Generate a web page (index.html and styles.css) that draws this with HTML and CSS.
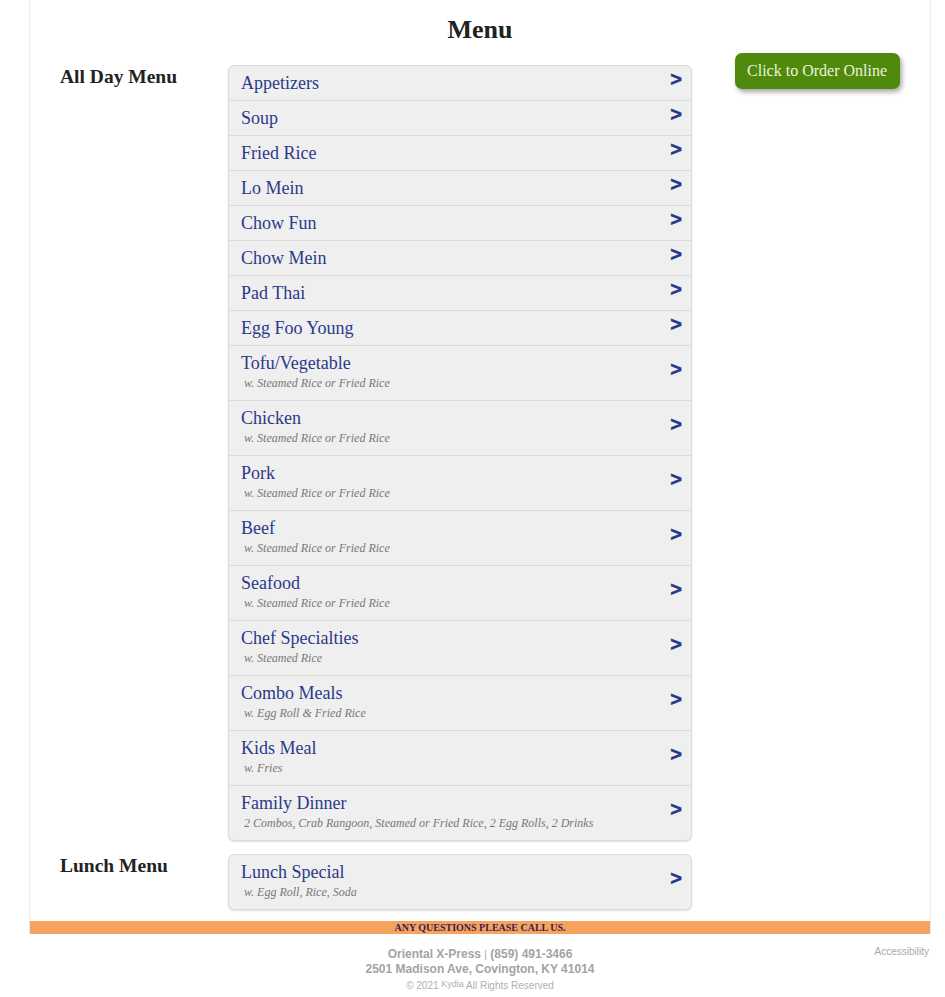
FILE: index.html
```html
<!DOCTYPE html>
<html lang="en">
<head>
<meta charset="utf-8">
<title>Menu</title>
<link rel="stylesheet" href="styles.css">
</head>
<body>
<div class="page">
  <h1 class="title">Menu</h1>
  <div class="content">
    <div class="main">
      <section class="section">
        <h2 class="label">All Day Menu</h2>
        <ul class="list">
          <li class="row"><div class="text"><div class="name">Appetizers</div></div><span class="chev">&gt;</span></li>
          <li class="row"><div class="text"><div class="name">Soup</div></div><span class="chev">&gt;</span></li>
          <li class="row"><div class="text"><div class="name">Fried Rice</div></div><span class="chev">&gt;</span></li>
          <li class="row"><div class="text"><div class="name">Lo Mein</div></div><span class="chev">&gt;</span></li>
          <li class="row"><div class="text"><div class="name">Chow Fun</div></div><span class="chev">&gt;</span></li>
          <li class="row"><div class="text"><div class="name">Chow Mein</div></div><span class="chev">&gt;</span></li>
          <li class="row"><div class="text"><div class="name">Pad Thai</div></div><span class="chev">&gt;</span></li>
          <li class="row"><div class="text"><div class="name">Egg Foo Young</div></div><span class="chev">&gt;</span></li>
          <li class="row"><div class="text"><div class="name">Tofu/Vegetable</div><div class="desc">w. Steamed Rice or Fried Rice</div></div><span class="chev">&gt;</span></li>
          <li class="row"><div class="text"><div class="name">Chicken</div><div class="desc">w. Steamed Rice or Fried Rice</div></div><span class="chev">&gt;</span></li>
          <li class="row"><div class="text"><div class="name">Pork</div><div class="desc">w. Steamed Rice or Fried Rice</div></div><span class="chev">&gt;</span></li>
          <li class="row"><div class="text"><div class="name">Beef</div><div class="desc">w. Steamed Rice or Fried Rice</div></div><span class="chev">&gt;</span></li>
          <li class="row"><div class="text"><div class="name">Seafood</div><div class="desc">w. Steamed Rice or Fried Rice</div></div><span class="chev">&gt;</span></li>
          <li class="row"><div class="text"><div class="name">Chef Specialties</div><div class="desc">w. Steamed Rice</div></div><span class="chev">&gt;</span></li>
          <li class="row"><div class="text"><div class="name">Combo Meals</div><div class="desc">w. Egg Roll &amp; Fried Rice</div></div><span class="chev">&gt;</span></li>
          <li class="row"><div class="text"><div class="name">Kids Meal</div><div class="desc">w. Fries</div></div><span class="chev">&gt;</span></li>
          <li class="row"><div class="text"><div class="name">Family Dinner</div><div class="desc">2 Combos, Crab Rangoon, Steamed or Fried Rice, 2 Egg Rolls, 2 Drinks</div></div><span class="chev">&gt;</span></li>
        </ul>
      </section>
      <section class="section section-lunch">
        <h2 class="label">Lunch Menu</h2>
        <ul class="list">
          <li class="row"><div class="text"><div class="name">Lunch Special</div><div class="desc">w. Egg Roll, Rice, Soda</div></div><span class="chev">&gt;</span></li>
        </ul>
      </section>
    </div>
    <aside class="aside">
      <a class="order-btn" href="#">Click to Order Online</a>
    </aside>
  </div>
  <div class="callbar">ANY QUESTIONS PLEASE CALL US.</div>
</div>
<footer class="footer">
  <a class="access" href="#">Accessibility</a>
  <div class="f-line1"><b>Oriental X-Press</b> <span class="pipe">|</span> <b>(859) 491-3466</b></div>
  <div class="f-line2">2501 Madison Ave, Covington, KY 41014</div>
  <div class="f-line3">© 2021 <span class="kydia">Kydia</span> All Rights Reserved</div>
</footer>
</body>
</html>
```
FILE: styles.css
```css
html, body {
  margin: 0;
  padding: 0;
  background: #ffffff;
}
body {
  font-family: "Liberation Serif", "Times New Roman", serif;
  color: #222;
}
.page {
  width: 900px;
  margin-left: 29px;
  border-left: 1px solid #ececec;
  border-right: 1px solid #ececec;
}
.title {
  margin: 0;
  padding-top: 15px;
  font-size: 26px;
  line-height: 30px;
  font-weight: bold;
  text-align: center;
  color: #222;
}
.content {
  display: flex;
  margin-top: 8px;
  padding-left: 30px;
  padding-right: 30px;
}
.main {
  margin-top: 12px;
  width: 632px;
}
.section {
  display: flex;
}
.section-lunch {
  margin-top: 13px;
}
.label {
  width: 168px;
  margin: 1px 0 0 0;
  font-size: 19.5px;
  line-height: 22px;
  font-weight: bold;
  color: #222;
}
.list {
  list-style: none;
  margin: 0;
  padding: 0;
  width: 462px;
  border: 1px solid #dcdcdc;
  border-radius: 6px;
  background: #efefef;
  box-shadow: 0 1px 2px rgba(0,0,0,0.12);
}
.row {
  display: flex;
  align-items: center;
  padding: 7px 9px 7px 12px;
  border-top: 1px solid #dcdcdc;
}
.row:first-child {
  border-top: none;
}
.text {
  flex: 1;
}
.name {
  font-size: 18px;
  line-height: 20px;
  color: #2b3a88;
}
.desc {
  font-size: 12px;
  line-height: 19px;
  padding-top: 1px;
  font-style: italic;
  color: #777;
  padding-left: 3px;
}
.chev {
  font-family: "Liberation Sans", Arial, sans-serif;
  font-weight: bold;
  font-size: 20px;
  line-height: 20px;
  color: #26348a;
  margin-top: -8px;
  -webkit-text-stroke: 0.4px #26348a;
}
.aside {
  flex: 1;
  display: flex;
  justify-content: flex-end;
  align-items: flex-start;
}
.order-btn {
  display: block;
  padding: 9px 13px 9px 12px;
  font-size: 16px;
  line-height: 18px;
  color: #eef2dc;
  background: #4f8a0d;
  border-radius: 7px;
  text-decoration: none;
  box-shadow: 2px 3px 5px rgba(0,0,0,0.35);
}
.callbar {
  margin-top: 11px;
  background: #f5a35f;
  text-align: center;
  font-size: 10px;
  line-height: 13px;
  height: 13px;
  font-weight: bold;
  color: #3b1b52;
}
.footer {
  width: 900px;
  margin-left: 30px;
  padding-top: 13px;
  text-align: center;
  font-family: "Liberation Sans", Arial, sans-serif;
  color: #a3a3a3;
  position: relative;
}
.access {
  position: absolute;
  right: 1px;
  top: 12px;
  font-size: 10px;
  line-height: 12px;
  color: #a8a8a8;
  text-decoration: none;
}
.f-line1, .f-line2 {
  font-size: 12px;
  line-height: 14px;
  font-weight: bold;
}
.pipe {
  font-weight: normal;
  font-size: 10px;
}
.f-line3 {
  font-size: 10px;
  line-height: 16px;
  color: #b0b0b0;
}
.kydia {
  font-size: 9px;
  vertical-align: 2px;
}
```
